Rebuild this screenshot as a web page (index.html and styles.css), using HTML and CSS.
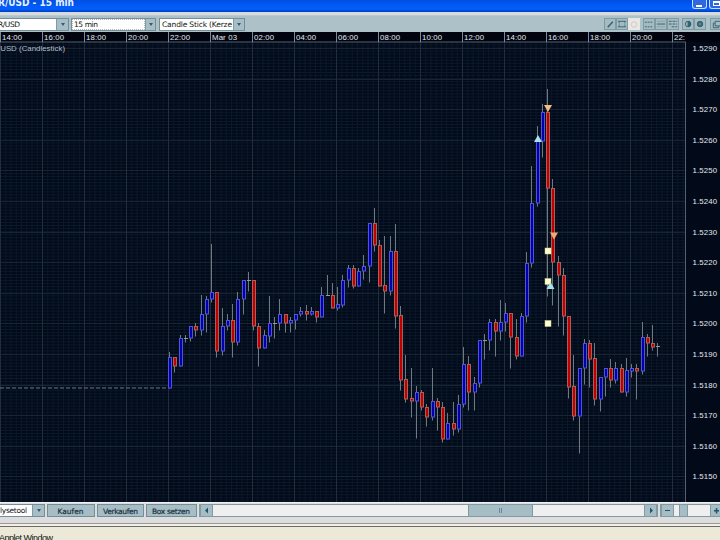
FILE: index.html
```html
<!DOCTYPE html>
<html lang="de">
<head>
<meta charset="utf-8">
<title>EUR/USD - 15 min</title>
<link rel="stylesheet" href="styles.css">
</head>
<body>
<header class="titlebar">
  <svg class="title" width="90" height="11"><text x="-2" y="6" textLength="76" lengthAdjust="spacingAndGlyphs">R/USD - 15 min</text></svg>
  <div class="winbtns"><span class="winbtn"><i class="min"></i></span><span class="winbtn"><i class="max"></i></span></div>
</header>
<div class="toolbar">
  <div class="select symbol"><svg width="56" height="11"><text x="-2" y="8" textLength="22">R/USD</text></svg><b class="arrow"></b></div>
  <div class="select period"><svg width="73" height="11"><text x="2" y="8" textLength="24">15 min</text></svg><b class="arrow"></b></div>
  <div class="select style"><svg width="73" height="11"><text x="2" y="8" textLength="70">Candle Stick (Kerze</text></svg><b class="arrow"></b></div>
  <div class="tools">
    <span class="tool"><svg viewBox="0 0 12 12"><path d="M3 9L8.500 3" stroke-width="1.500"/></svg></span>
    <span class="tool"><svg viewBox="0 0 12 12"><path d="M1 2.500H10M1 8.500H10" /><path d="M2.500 3V8M8.500 3V8" stroke-dasharray="1 1"/></svg></span>
    <span class="tool active"><svg viewBox="0 0 12 12"><circle cx="5.500" cy="6" r="3"/></svg></span>
    <span class="tool gap"><svg viewBox="0 0 12 12"><path d="M1 3.500H10M1 8.500H10" stroke-dasharray="2 1"/></svg></span>
    <span class="tool"><svg viewBox="0 0 12 12"><path d="M1 5.500H10"/><path d="M1 2.500H10M1 8.500H10" opacity=".25"/></svg></span>
    <span class="tool"><svg viewBox="0 0 12 12"><path d="M1 2.500H10M1 5.500H10M4 8.500H10" stroke-dasharray="3 1"/></svg></span>
    <span class="tool gap"><svg viewBox="0 0 12 12"><circle cx="5.500" cy="5.500" r="3"/><path d="M5.500 2.500a3 3 0 0 1 0 6z" fill="#2e6674"/></svg></span>
    <span class="tool"><svg viewBox="0 0 12 12"><circle cx="5.500" cy="5.500" r="3" fill="#2e6674"/><circle cx="5.500" cy="5.500" r="1" stroke="#6f98a3"/></svg></span>
    <span class="tool gap3"><svg viewBox="0 0 12 12"><path d="M4.500 2.500H10.500V7.500H4.500ZM4 4.500H2.500V9.500H8.500V8"/></svg></span>
  </div>
</div>
<svg id="chart" class="chart" width="720" height="470" viewBox="0 32 720 470"></svg>
<footer class="bottombar">
  <div class="select analyse"><svg width="32" height="10"><text x="0" y="8" textLength="27">lysetool</text></svg><b class="arrow"></b></div>
  <button class="btn kaufen"><svg width="46" height="10"><text x="9.500" y="8" textLength="26">Kaufen</text></svg></button>
  <button class="btn verkaufen"><svg width="45" height="10"><text x="5" y="8" textLength="35">Verkaufen</text></svg></button>
  <button class="btn box"><svg width="48" height="10"><text x="5" y="8" textLength="38">Box setzen</text></svg></button>
  <div class="scroll">
    <span class="step"><svg viewBox="0 0 12 11"><path d="M7 2.500V8.500L4 5.500Z"/></svg></span>
    <span class="track"><span class="thumb"><i></i><i></i></span></span>
    <span class="step"><svg viewBox="0 0 12 11"><path d="M5 2.500V8.500L8 5.500Z"/></svg></span>
  </div>
  <div class="zoom">
    <span class="step"><svg viewBox="0 0 12 11"><path d="M3 5H8V6H3Z"/></svg></span>
    <span class="ztrack"><span class="zthumb"></span></span>
    <span class="step"><svg viewBox="0 0 12 11"><path d="M3 5H8V6.500H3ZM4.800 3H6.300V8.500H4.800Z"/></svg></span>
  </div>
</footer>
<div class="rule"></div>
<div class="status"><svg width="80" height="13"><text x="-1" y="14" textLength="54">Applet Window</text></svg></div>
<script src="chart.js"></script>
</body>
</html>
```
FILE: styles.css
```css
* { box-sizing: border-box; }
body { margin: 0; width: 720px; height: 540px; overflow: hidden; background: #ece9d8; display: flex; flex-direction: column; font-family: "DejaVu Sans", sans-serif; }
svg { display: block; }
text { font-family: "Liberation Sans", sans-serif; }
.titlebar { height: 15px; flex: none; display: flex; justify-content: space-between; background: linear-gradient(#0050df 0, #0058f4 5px, #0060ff 9px, #0049d5 11px, #0038b0 12px, #d4dade 12px, #d8dcde 15px); }
.title text { font-family: "DejaVu Sans", sans-serif; font-size: 10px; font-weight: bold; fill: #e6efff; }
.winbtns { display: flex; gap: 2px; margin-right: -4px; }
.winbtn { width: 15px; height: 9px; border: 1px solid #c9dcff; border-top: 0; border-radius: 0 0 3px 3px; background: #2f68de; padding: 2px 3px; }
.winbtn i { display: block; }
.min { width: 6px; height: 2px; margin-top: 3px; background: #fff; }
.max { width: 7px; height: 5px; margin-top: -1px; border: 1px solid #fff; border-top-width: 2px; }
.toolbar { height: 17px; flex: none; display: flex; align-items: center; gap: 3px; background: #adc1c8; border-top: 1px solid #b8c9cf; }
.select { display: flex; height: 13px; flex: none; border: 1px solid #748e97; background: #fff; overflow: hidden; }
.select svg { flex: none; }
.select text { font-family: "DejaVu Sans", sans-serif; font-size: 7.500px; fill: #111; }
.arrow { flex: 1; background: #a8bec6; border-left: 1px solid #819ba4; display: flex; align-items: center; justify-content: center; }
.arrow::after { content: ""; border: 2.500px solid transparent; border-top: 3px solid #2e5f6e; border-bottom: 0; }
.symbol { width: 69px; border-left: 0; }
.period { width: 85px; margin-left: -1px; }
.style { width: 86px; }
.period svg { outline: 1px dotted #b5b5b5; outline-offset: -1px; }
.tools { display: flex; margin-left: auto; margin-right: -2px; }
.tool { width: 12px; height: 12px; flex: none; border: 1px solid #819aa2; background: #a5bbc2; }
.tool svg { width: 11px; height: 11px; fill: none; stroke: #315f6b; stroke-width: 1; }
.tool.active { background: #e9e7e1; border-color: #e9e7e1; }
.tool.active svg { stroke: #ccc9c2; }
.gap { margin-left: 3px; }
.gap3 { margin-left: 4px; }
.chart { flex: none; background: #020918; }
.chart .axis { font-size: 7.800px; fill: #e4e8ee; }
.bottombar { height: 21px; flex: none; display: flex; align-items: center; padding: 0 0 5px; background: #dddddd; border-top: 1px solid #edf1f3; }
.bottombar .select { height: 13px; }
.bottombar .select text { font-size: 7.500px; }
.analyse { width: 45px; border-left: 0; }
.btn { height: 13px; padding: 0; border: 1px solid #748e97; background: #a6bdc5; flex: none; }
.btn text { font-family: "DejaVu Sans", sans-serif; font-size: 7.500px; fill: #142c35; stroke: #142c35; stroke-width: .15; }
.kaufen { width: 48px; margin-left: 2px; }
.verkaufen { width: 47px; margin-left: 2px; }
.box { width: 51px; margin-left: 2px; }
.scroll { width: 459px; height: 13px; margin-left: 2px; display: flex; border: 1px solid #829aa2; background: #efefef; flex: none; }
.step { width: 13px; flex: none; background: #a6bdc5; border: 0 solid #829aa2; border-width: 0 1px; }
.step svg { width: 12px; height: 11px; fill: #1e5868; }
.track { flex: 1; display: flex; padding-left: 255px; }
.thumb { width: 65px; border: 0 solid #7f979f; border-width: 0 1px; background: #a6bdc5; display: flex; gap: 1px; align-items: center; justify-content: center; }
.thumb i { width: 1px; height: 5px; background: #668a95; }
.zoom { width: 64px; height: 13px; margin-left: 2px; display: flex; border: 1px solid #829aa2; background: #efefef; flex: none; }
.ztrack { width: 36px; padding-left: 5px; display: flex; flex: none; }
.zthumb { width: 9px; background: #a6bdc5; border: 0 solid #829aa2; border-width: 0 1px; }
.rule { height: 4px; flex: none; border-top: 1px solid #9a9a98; border-bottom: 1px solid #6d6b66; background: #f1efe8; }
.status { height: 13px; flex: none; background: #ece9d8; }
.status text { font-size: 9px; fill: #111; }
```
FILE: chart.js
```js
// kind (U rising, D falling, X doji), high, body top, body bottom, low
const candles = `U352,357,388,388 D357,357,366,372 U335,338,366,366 X335,338,338,342 U326,326,338,341 D323,326,330,336
U295,314,330,335 U296,299,314,332 U244,292,299,302 D292,292,351,357 U308,326,351,355 U314,320,326,330 D304,320,342,357
U292,299,342,345 U280,280,299,314 X272,280,280,291 D280,280,326,330 D323,326,348,366 U330,335,348,348 U296,323,336,342
X317,323,323,338 U299,314,323,330 D314,314,323,332 U317,320,323,332 U314,314,320,329 U307,311,314,316 D305,311,314,320
U307,311,314,315 D311,311,317,322 U287,295,317,317 X275,295,295,295 D283,295,308,308 U287,304,308,310 U275,280,305,307
U265,268,280,287 D265,268,286,288 U268,271,286,286 U255,266,271,279 U223,223,266,282 D208,223,245,251 D240,245,286,286
D236,285,291,313 U236,251,291,295 D224,251,316,328 D306,315,380,390 D355,379,399,402 D368,398,401,417 U386,392,401,438
D390,392,407,410 D404,407,417,426 U368,401,417,420 D398,401,407,430 D402,407,439,442 U413,423,439,439 D402,423,429,435
U395,404,429,432 U347,364,404,407 D356,364,392,410 U377,383,392,410 U340,340,383,387 X334,340,340,359 U319,322,340,350
D319,322,331,356 U300,322,331,340 U303,313,322,331 D313,313,337,368 D319,337,356,359 U313,316,356,356 U252,263,316,322
U166,203,263,267 U126,141,203,206 U104,112,141,157 D89,112,188,296 D179,188,262,305 D256,262,275,326 D268,275,316,335
D316,316,387,398 D355,386,416,420 U368,368,416,453 U339,343,368,384 D340,343,359,387 D343,358,399,405 U377,377,399,411
U368,368,377,396 D359,368,380,387 U362,368,380,383 D364,368,392,392 U358,370,392,396 U364,368,371,377 D364,368,371,399
U322,337,371,374 D334,337,343,356 D325,343,347,350 X343,346,346,356`.split(/\s+/).map(s => [s[0], ...s.slice(1).split(",").map(Number)]);

const out = [];
const line = (x1, y1, x2, y2, c, extra = "") => out.push(`<line x1="${x1}" y1="${y1}" x2="${x2}" y2="${y2}" stroke="${c}" ${extra}/>`);
const text = (x, y, s, w, fill = "") => out.push(`<text class="axis" x="${x}" y="${y}" textLength="${w}"${fill}>${s}</text>`);

// fine grid: one candle wide, one pip high
for (let x = 0.5; x < 685; x += 5.25) line(x, 42, x, 502, "#0a1829");
for (let y = 44.96; y < 502; y += 3.06) line(0, y, 685, y, "#0b192a");
for (let k = 0; k < 15; k++) { const y = Math.round(48 + k * 30.6) + 0.5; line(0, y, 685, y, "#172433"); }
for (let k = 0; k < 17; k++) line(k * 42 + 0.5, 42, k * 42 + 0.5, 502, "#1f2d3d");

// time axis
out.push('<rect x="0" y="32" width="720" height="10" fill="#01040f"/>');
line(0, 42, 686, 42, "#526273");
line(685.5, 42, 685.5, 502, "#526273");
const times = ["14:00", "16:00", "18:00", "20:00", "22:00", "Mar 03", "02:00", "04:00", "06:00", "08:00", "10:00", "12:00", "14:00", "16:00", "18:00", "20:00", "22:"];
times.forEach((t, k) => {
  line(k * 42 + 0.5, 32, k * 42 + 0.5, 42, "#7d8997");
  text(k * 42 + 2, 40, t, k === 5 ? 25 : k === 16 ? 11 : 20);
});
// price axis
for (let k = 0; k < 15; k++) text(692.5, 51 + k * 30.6, (1.529 - k * 0.001).toFixed(4), 24.5);
text(-2, 50.5, "/USD (Candlestick)", 67, ' style="fill:#b4bdc8"');

line(0, 388, 168, 388, "#687380", 'stroke-dasharray="4 2"');

candles.forEach(([kind, high, top, bottom, low], i) => {
  const x = Math.floor(169.7 + i * 5.25) + 0.5;
  line(x, high, x, low + 0.5, "#6d7a82");
  if (kind === "X") { line(x - 1.5, top + 0.5, x + 2.5, top + 0.5, "#8f9ba2"); return; }
  const up = kind === "U";
  out.push(`<rect x="${x - 1}" y="${top + 0.5}" width="3" height="${Math.max(bottom - top - 0.5, 2)}" fill="${up ? "#0000b0" : "#c00000"}" stroke="${up ? "#5355cf" : "#aa6058"}" stroke-width="1"/>`);
});

// order markers
const tri = (x, y, d, c) => out.push(`<path d="M${x - 4} ${y - 3 * d}H${x + 4}L${x} ${y + 4 * d}Z" fill="${c}"/>`);
const box = (x, y) => out.push(`<rect x="${x - 3}" y="${y - 3}" width="6" height="6" fill="#ffffc8" stroke="#c9c79b" stroke-width=".5"/>`);
tri(548, 108, 1, "#f5bd7d");
tri(554, 235.500, 1, "#efaa76");
tri(538, 139, -1, "#a9e4ee");
box(548, 251);
box(548, 281.500);
box(548, 323.500);
tri(550.500, 286, -1, "#a9e4ee");
document.getElementById("chart").innerHTML = out.join("");
```
